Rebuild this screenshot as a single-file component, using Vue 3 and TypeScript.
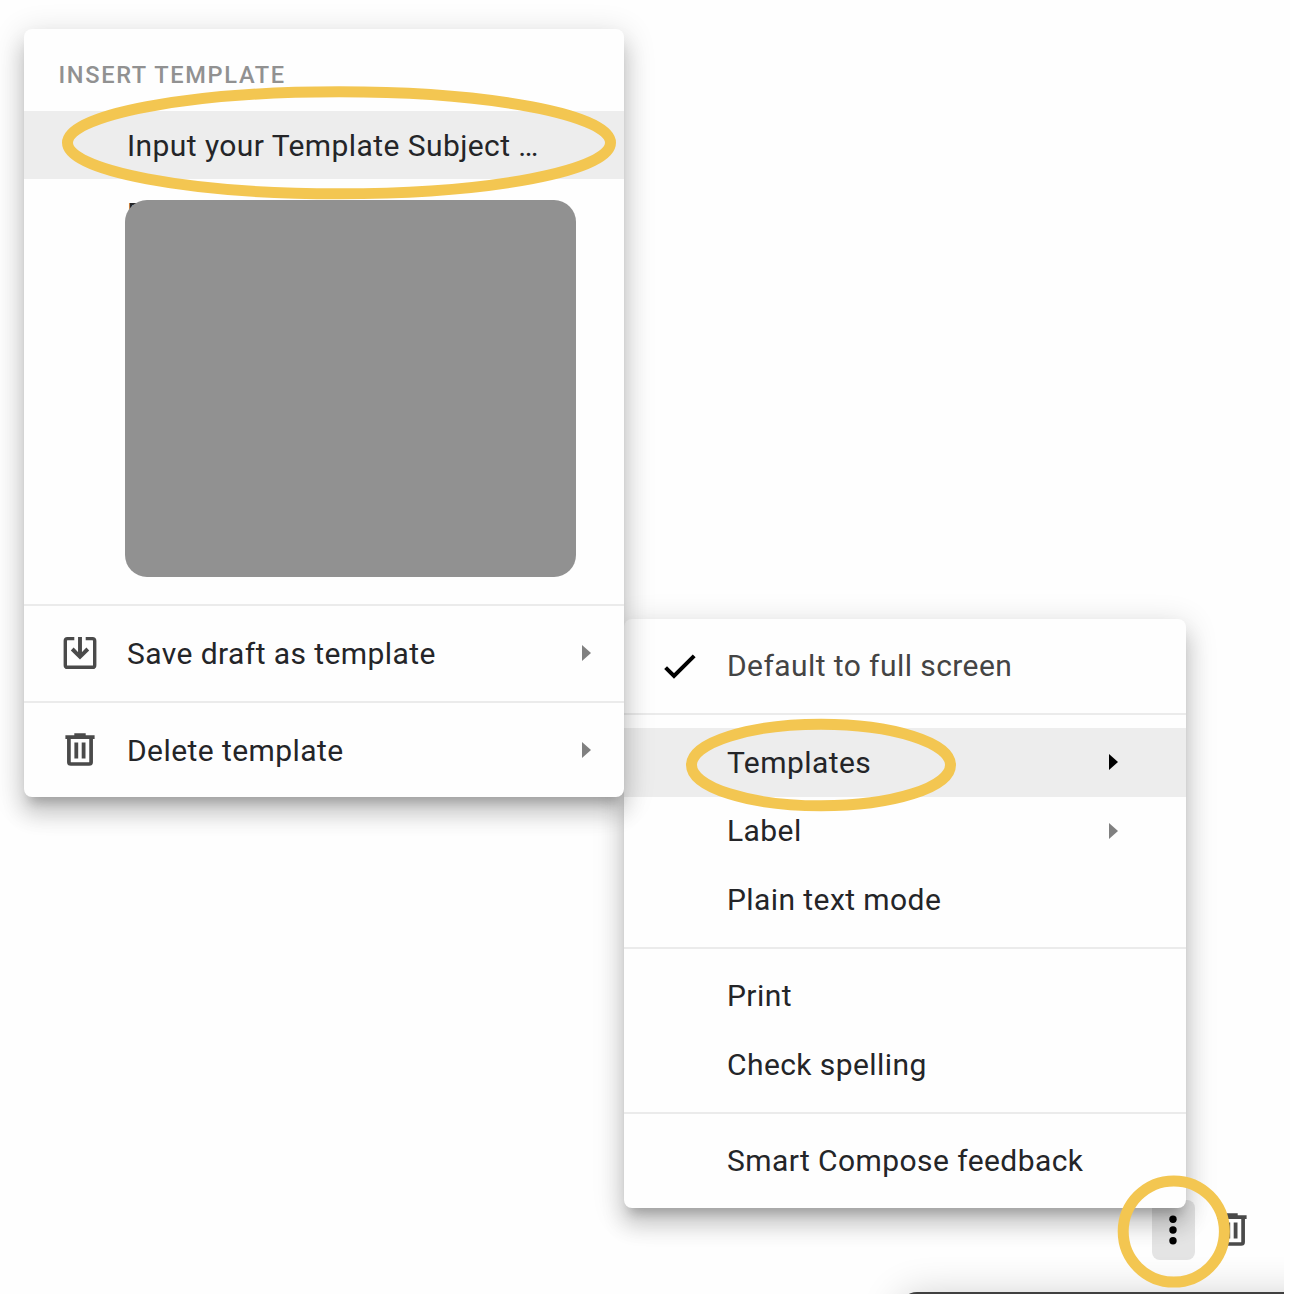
<script setup lang="ts">
interface Item {
  label: string
  icon?: 'save' | 'trash' | 'check'
  arrow?: boolean
  active?: boolean
  soft?: boolean
}

const templateGroups: Item[][] = [
  [{ label: 'Save draft as template', icon: 'save', arrow: true }],
  [{ label: 'Delete template', icon: 'trash', arrow: true }],
]

const optionGroups: Item[][] = [
  [{ label: 'Default to full screen', icon: 'check', soft: true }],
  [
    { label: 'Templates', arrow: true, active: true },
    { label: 'Label', arrow: true },
    { label: 'Plain text mode' },
  ],
  [{ label: 'Print' }, { label: 'Check spelling' }],
  [{ label: 'Smart Compose feedback' }],
]
</script>

<template>
  <div class="page">
    <svg class="defs" width="0" height="0" aria-hidden="true">
      <symbol id="i-save" viewBox="0 0 34 34">
        <path d="M11.3 2.6H4.4Q2.3 2.6 2.3 4.7V29.2Q2.3 31.3 4.4 31.3H29.6Q31.7 31.3 31.7 29.2V4.7Q31.7 2.6 29.6 2.6H22.7" fill="none" stroke="#4a4a4a" stroke-width="3.4" />
        <path d="M2.5 31.5H31.5" stroke="#4a4a4a" stroke-width="3" />
        <path d="M17 1V20M9.2 13L17 20.8L24.8 13" fill="none" stroke="#4a4a4a" stroke-width="3.9" />
      </symbol>
      <symbol id="i-trash" viewBox="0 0 34 34">
        <path d="M2.4 4.1H31.6M11.3 2.1H22.7" stroke="#4a4a4a" stroke-width="3.6" />
        <path d="M5.9 4V29Q5.9 31 7.9 31H26.1Q28.1 31 28.1 29V4" fill="none" stroke="#4a4a4a" stroke-width="3.7" />
        <path d="M13.3 9.6V25.6M20.6 9.6V25.6" stroke="#4a4a4a" stroke-width="3.8" />
      </symbol>
      <symbol id="i-check" viewBox="0 0 34 34">
        <path d="M2.6 18.6L11 27L31.2 6.8" fill="none" stroke="#000" stroke-width="4" />
      </symbol>
    </svg>

    <div class="toolbar">
      <button class="more">
        <svg width="10" height="34" viewBox="0 0 10 34">
          <circle cx="5" cy="6.3" r="3.7" />
          <circle cx="5" cy="17" r="3.7" />
          <circle cx="5" cy="27.7" r="3.7" />
        </svg>
      </button>
      <svg class="bin"><use href="#i-trash" /></svg>
    </div>
    <div class="dock"><div class="dock-bar" /></div>

    <section class="menu options">
      <div v-for="(group, g) in optionGroups" :key="g" class="group">
        <div v-for="item in group" :key="item.label" class="row" :class="{ active: item.active, soft: item.soft }">
          <svg v-if="item.icon" class="icon"><use :href="'#i-' + item.icon" /></svg>
          <span class="label">{{ item.label }}</span>
          <span v-if="item.arrow" class="arrow" />
        </div>
      </div>
    </section>

    <section class="menu templates">
      <h2>INSERT TEMPLATE</h2>
      <div class="row active"><span class="label">Input your Template Subject …</span></div>
      <div class="list">
        <div class="row"><span class="label">F</span></div>
        <div class="mask" />
      </div>
      <div v-for="(group, g) in templateGroups" :key="g" class="group">
        <div v-for="item in group" :key="item.label" class="row">
          <svg v-if="item.icon" class="icon"><use :href="'#i-' + item.icon" /></svg>
          <span class="label">{{ item.label }}</span>
          <span v-if="item.arrow" class="arrow" />
        </div>
      </div>
    </section>

    <svg class="marks" viewBox="0 0 1290 1294" fill="none" stroke="#f3c651" stroke-width="11">
      <ellipse cx="339" cy="142.8" rx="271.5" ry="51" />
      <ellipse cx="821" cy="765" rx="129.5" ry="40.8" />
      <circle cx="1173.8" cy="1231.5" r="50.6" />
    </svg>
  </div>
</template>

<style>
body { margin: 0; background: #fff; }
</style>

<style scoped>
.page {
  position: relative;
  width: 1290px;
  height: 1294px;
  overflow: hidden;
  background: #fefefe;
  font-family: Roboto, sans-serif;
}
.defs { position: absolute; }
.menu {
  position: absolute;
  box-sizing: border-box;
  background: #fefefe;
  border-radius: 8px;
  color: #242528;
  box-shadow:
    0 17px 21px 2px rgba(0, 0, 0, 0.14),
    0 6px 30px 4px rgba(0, 0, 0, 0.12),
    0 11px 11px -6px rgba(0, 0, 0, 0.2);
}
.templates { left: 24px; top: 29px; width: 600px; height: 767.5px; }
.options { left: 624px; top: 618.5px; width: 562px; height: 589.5px; }
h2 {
  margin: 0;
  height: 81.5px;
  box-sizing: border-box;
  padding: 30.5px 0 0 34.5px;
  font-size: 23.6px;
  line-height: 30px;
  font-weight: 500;
  letter-spacing: 1.65px;
  color: #919191;
}
.row {
  position: relative;
  display: flex;
  align-items: center;
  height: 68.5px;
  padding-left: 103px;
  padding-right: 33.5px;
  font-size: 30px;
  letter-spacing: 0.42px;
  white-space: nowrap;
}
.options .row { padding-right: 68px; }
.active { background: #ededed; }
.soft { color: #444; }
.label { flex: 1; line-height: 36px; padding-top: 1px; }
.templates .label { padding-top: 2px; }
.icon {
  width: 34px;
  height: 34px;
  margin-left: -64px;
  margin-right: 30px;
}
.group {
  box-sizing: border-box;
  padding: 13px 0;
  border-top: 2px solid #ebebeb;
}
.options .group:first-child { border-top: 0; }
.arrow {
  border-left: 9px solid #808080;
  border-top: 8.5px solid transparent;
  border-bottom: 8.5px solid transparent;
}
.active .arrow { border-left-color: #000; }
.list { height: 425px; }
.mask {
  position: relative;
  width: 451px;
  height: 377px;
  margin: -47.5px 0 0 101px;
  border-radius: 22px;
  background: #919191;
}
.toolbar {
  position: absolute;
  left: 1151.5px;
  top: 1200px;
  display: flex;
  align-items: center;
  gap: 20.5px;
}
.more {
  width: 43px;
  height: 59.5px;
  padding: 0;
  border: 0;
  border-radius: 8px;
  background: #e4e4e4;
  display: flex;
  align-items: center;
  justify-content: center;
}
.bin { width: 34px; height: 34px; }
.dock {
  position: absolute;
  left: 850px;
  top: 1220px;
  width: 434px;
  height: 74px;
  overflow: hidden;
}
.dock-bar {
  margin: 72px 0 0 50px;
  width: 500px;
  height: 80px;
  border-radius: 17px 0 0 0;
  background: #404040;
  box-shadow: 0 4px 40px rgba(0, 0, 0, 0.2);
}
.marks { position: absolute; inset: 0; width: 1290px; height: 1294px; }
</style>
